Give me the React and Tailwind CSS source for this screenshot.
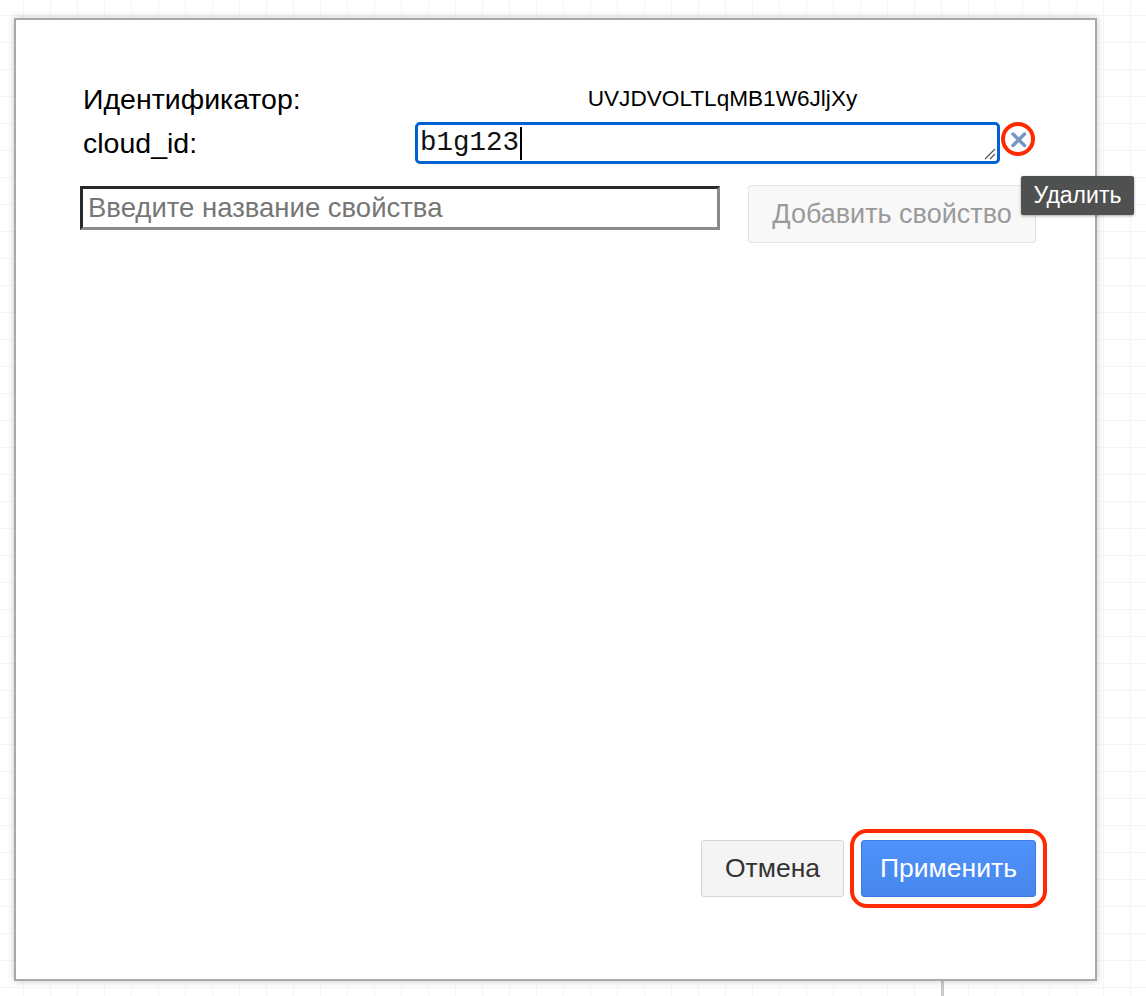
import React from 'react';

const font = { fontFamily: '"Liberation Sans", Arial, sans-serif' };

const DeleteButton = () => (
  <span className="relative mb-[8px] ml-px flex h-[34px] w-[34px] shrink-0 items-center justify-center">
    <svg width="34" height="34" viewBox="0 0 34 34" className="absolute inset-0">
      <circle cx="17" cy="17" r="15" fill="none" stroke="#ff2a00" strokeWidth="4" />
      <path d="M12 12 L23.5 23.5 M23.5 12 L12 23.5" stroke="#7595c4" strokeWidth="3.4" strokeLinecap="round" />
    </svg>
    {/* Tooltip */}
    <span className="absolute left-[20px] top-[54px] z-10 flex h-[39px] w-[113px] items-center justify-center rounded-[2px] bg-[#4f5050] text-[23px] text-white shadow-[0_1px_3px_rgba(0,0,0,0.35)]">
      Удалить
    </span>
  </span>
);

export default function App() {
  return (
    <div
      className="relative h-[996px] w-full overflow-hidden bg-white bg-[linear-gradient(to_right,#f5f5f5_1px,transparent_1px),linear-gradient(to_bottom,#f5f5f5_1px,transparent_1px)] bg-[size:27px_27px] bg-[position:23px_15px] pl-[14px] pt-[18px]"
      style={font}
    >
      {/* diagram edge peeking under the dialog */}
      <div className="absolute left-[941px] top-[960px] h-[40px] w-[3px] bg-[#c9c9c9]" />

      {/* Dialog */}
      <div className="relative flex h-[963px] w-[1083px] flex-col border-2 border-[#a8a8a8] bg-white pl-[64px] pr-[59px] pt-[63px] pb-[82px] shadow-[0_0_7px_rgba(0,0,0,0.22)]">
        {/* Identifier row */}
        <div className="flex items-start">
          <div className="w-[335px] pl-[3px] text-[28.5px] leading-[32px] text-black">Идентификатор:</div>
          <div className="w-[615px] pt-[1px] text-center text-[22.6px] leading-[30px] text-black">UVJDVOLTLqMB1W6JljXy</div>
        </div>

        {/* cloud_id row */}
        <div className="mt-[7px] flex items-center">
          <div className="w-[335px] pl-[3px] text-[28.5px] leading-[32px] text-black">cloud_id:</div>
          <div className="relative flex h-[42px] w-[585px] items-center rounded-[5px] border-[3px] border-[#0062d1] bg-white pl-[2px]">
            <span className="text-[27.5px] leading-[32px] text-[#111]" style={{ fontFamily: '"Liberation Mono", "Courier New", monospace' }}>
              b1g123
            </span>
            <span className="ml-px h-[33px] w-[2px] bg-black" />
            {/* resize grip */}
            <svg width="14" height="14" viewBox="0 0 14 14" className="absolute bottom-px right-px">
              <path d="M13 3 L3 13 M13 8 L8 13" stroke="#555" strokeWidth="1.2" />
            </svg>
          </div>
          <DeleteButton />
        </div>

        {/* add property row */}
        <div className="mt-[21px] flex items-start">
          <div className="mt-px flex h-[44px] w-[640px] items-center border-[3px] border-b-[#8a8a8a] border-l-[#2a2a2a] border-r-[#8a8a8a] border-t-[#2a2a2a] bg-white pl-[5px]">
            <span className="text-[27.5px] leading-[32px] text-[#767676]">Введите название свойства</span>
          </div>
          <button className="ml-[28px] flex h-[58px] w-[288px] items-center justify-center rounded-[3px] border border-[#e4e4e4] bg-[#f8f8f8] text-[27px] text-[#9a9a9a]">
            Добавить свойство
          </button>
        </div>

        <div className="flex-1" />

        {/* footer buttons */}
        <div className="flex items-center justify-end gap-[17px]">
          <button className="flex h-[57px] w-[143px] items-center justify-center rounded-[3px] border border-[#d5d5d5] bg-[#f4f4f4] text-[26.5px] text-[#333]">
            Отмена
          </button>
          <div className="relative">
            <button className="flex h-[57px] w-[175px] items-center justify-center rounded-[3px] border border-[#3b7be6] bg-[linear-gradient(to_bottom,#4f92fb,#4787ed)] text-[26.5px] text-white">
              Применить
            </button>
            <span className="pointer-events-none absolute -inset-x-[11px] -inset-y-[11px] rounded-[17px] border-4 border-[#ff2a00]" />
          </div>
        </div>
      </div>
    </div>
  );
}
